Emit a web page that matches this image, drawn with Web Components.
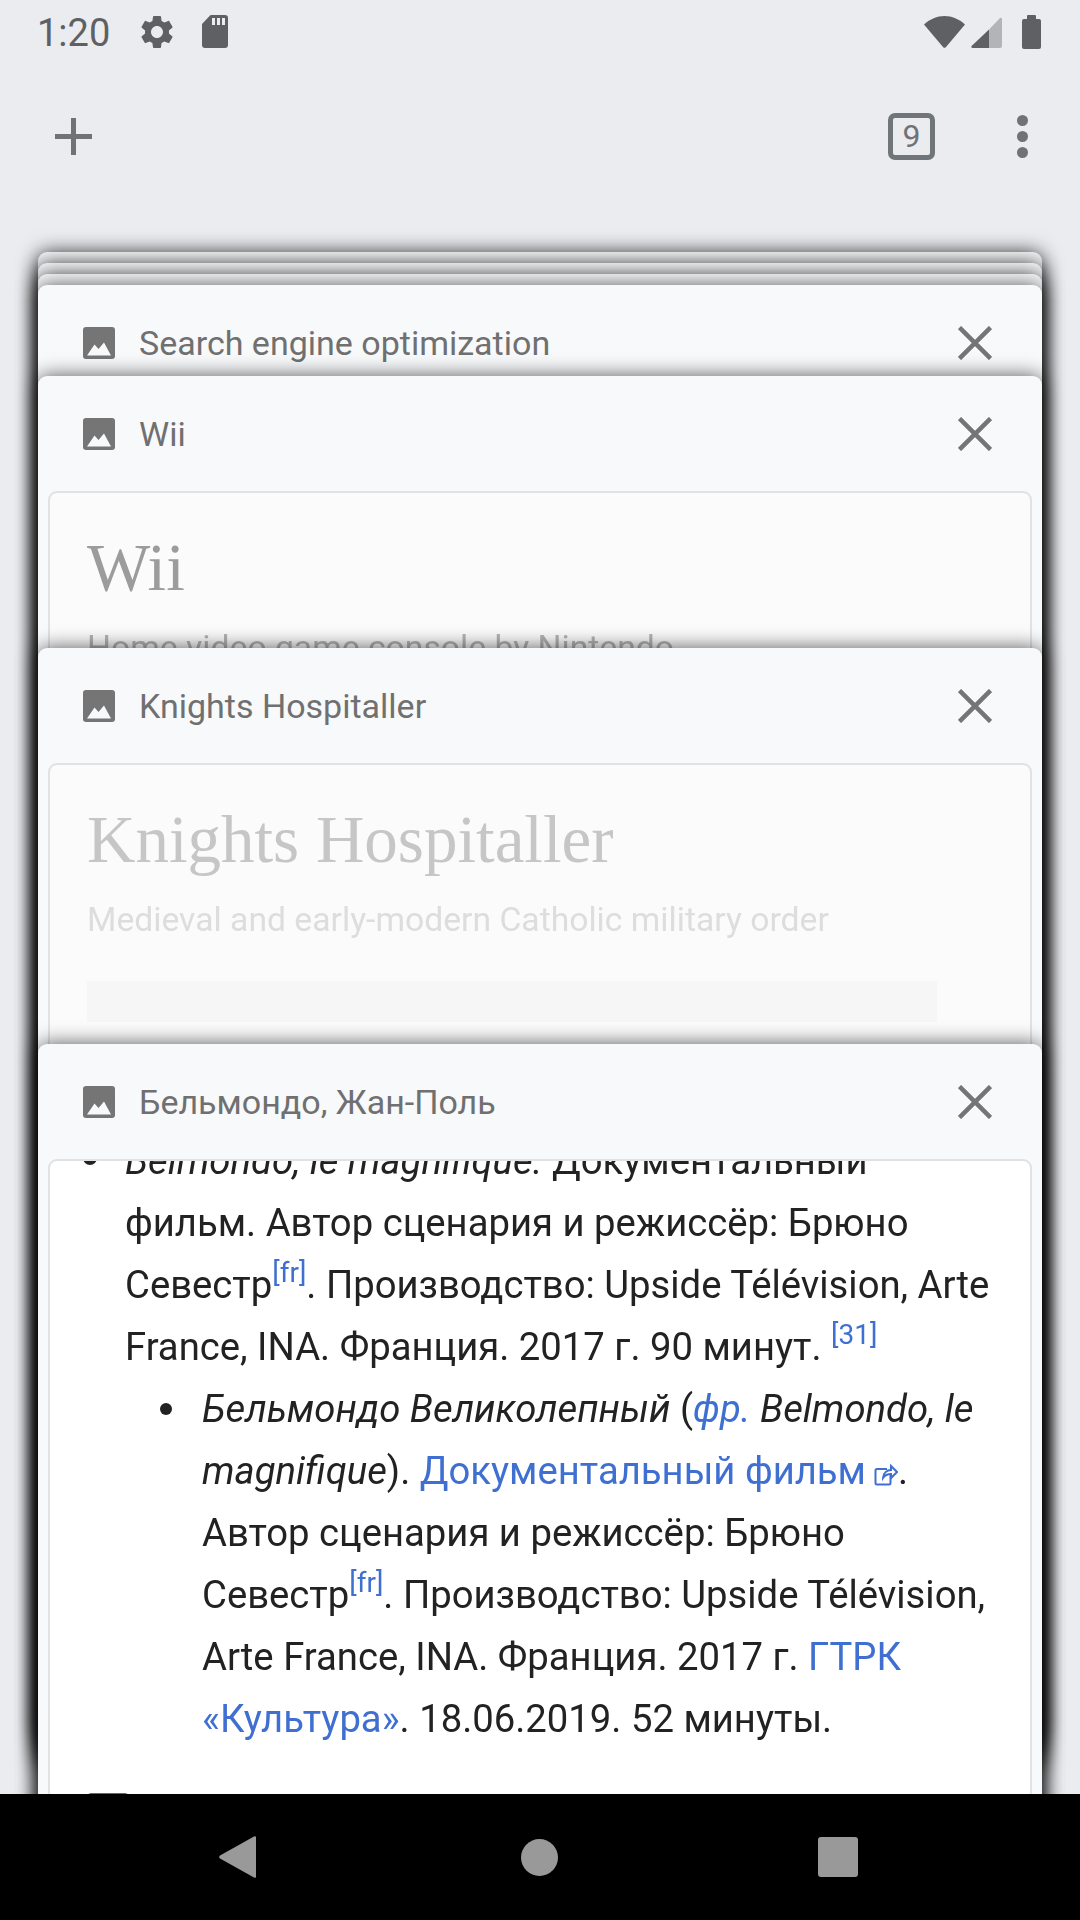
<!DOCTYPE html>
<html lang="ru">
<head>
<meta charset="utf-8">
<title>Tabs</title>
<style>
  html, body { margin: 0; padding: 0; background: #ebecf0; }
</style>
</head>
<body>
<phone-screen>
  <status-bar slot="status"></status-bar>
  <tab-toolbar slot="toolbar" count="9"></tab-toolbar>
  <tab-card slot="tabs" style="--peek: 11px"></tab-card>
  <tab-card slot="tabs" style="--peek: 11px"></tab-card>
  <tab-card slot="tabs" style="--peek: 11px"></tab-card>
  <tab-card slot="tabs" style="--peek: 91px" label="Search engine optimization"></tab-card>
  <tab-card slot="tabs" style="--peek: 272px" label="Wii">
    <page-intro heading="Wii" sub="Home video game console by Nintendo"
      style="--heading-color: #9c9c9c; --sub-color: #b4b4b4"></page-intro>
  </tab-card>
  <tab-card slot="tabs" style="--peek: 396px" label="Knights Hospitaller">
    <page-intro heading="Knights Hospitaller" sub="Medieval and early-modern Catholic military order"
      style="--heading-color: #c6c6c6; --sub-color: #dddddd"></page-intro>
  </tab-card>
  <tab-card slot="tabs" style="--peek: 750px; --page-bg: #fff" label="Бельмондо, Жан-Поль">
    <film-notes></film-notes>
  </tab-card>
  <nav-bar slot="nav"></nav-bar>
</phone-screen>

<script>
class PhoneScreen extends HTMLElement {
  constructor() {
    super();
    this.attachShadow({ mode: 'open' });
    this.shadowRoot.innerHTML = /* html */ `
      <style>
        :host {
          display: flex;
          flex-direction: column;
          width: 1080px;
          height: 1920px;
          overflow: hidden;
          background: #ebecf0;
          font-family: Roboto, "Noto Sans", sans-serif;
        }
        .tabs {
          flex: 1;
          min-height: 0;
          overflow: hidden;
          padding: 43px 38px 0;
        }
      </style>
      <slot name="status"></slot>
      <slot name="toolbar"></slot>
      <div class="tabs"><slot name="tabs"></slot></div>
      <slot name="nav"></slot>
    `;
  }
}

class StatusBar extends HTMLElement {
  constructor() {
    super();
    this.attachShadow({ mode: 'open' });
    this.shadowRoot.innerHTML = /* html */ `
      <style>
        :host {
          display: flex;
          align-items: center;
          height: 63px;
          padding: 0 39px 0 37px;
          color: #5f6063;
        }
        .time { font-size: 38px; line-height: 1; margin-top: 2px; }
        svg { display: block; fill: currentColor; }
        .gear { margin-left: 27px; }
        .sd { margin-left: 25px; }
        .wifi { margin-left: auto; }
        .signal { margin-left: 6px; margin-top: 1px; }
        .battery { margin-left: 20px; }
      </style>
      <span class="time">1:20</span>
      <svg class="gear" width="40" height="40" viewBox="0 0 24 24"><path d="M19.14 12.94c.04-.3.06-.61.06-.94 0-.32-.02-.64-.07-.94l2.03-1.58c.18-.14.23-.41.12-.61l-1.92-3.32c-.12-.22-.37-.29-.59-.22l-2.39.96c-.5-.38-1.03-.7-1.62-.94l-.36-2.54c-.04-.24-.24-.41-.48-.41h-3.84c-.24 0-.43.17-.47.41l-.36 2.54c-.59.24-1.13.57-1.62.94l-2.39-.96c-.22-.08-.47 0-.59.22L2.74 8.87c-.12.21-.08.47.12.61l2.03 1.58c-.05.3-.09.63-.09.94s.02.64.07.94l-2.03 1.58c-.18.14-.23.41-.12.61l1.92 3.32c.12.22.37.29.59.22l2.39-.96c.5.38 1.03.7 1.62.94l.36 2.54c.05.24.24.41.48.41h3.84c.24 0 .44-.17.47-.41l.36-2.54c.59-.24 1.13-.56 1.62-.94l2.39.96c.22.08.47 0 .59-.22l1.92-3.32c.12-.22.07-.47-.12-.61l-2.01-1.58zM12 15.6c-1.98 0-3.6-1.62-3.6-3.6s1.62-3.6 3.6-3.6 3.6 1.62 3.6 3.6-1.62 3.6-3.6 3.6z"/></svg>
      <svg class="sd" width="26" height="33" viewBox="0 0 26 33"><path fill-rule="evenodd" d="M9 0H23a3 3 0 0 1 3 3V30a3 3 0 0 1-3 3H3a3 3 0 0 1-3-3V9.5a1.5 1.5 0 0 1 .5-1L8 .5A1.5 1.5 0 0 1 9 0zM10 3v7h3V3zM15 3v7h3V3zM20 3v7h3V3z"/></svg>
      <svg class="wifi" width="41" height="32" viewBox="0 0 41 32"><path d="M20.5 0C28 0 35 3 41 8.500L22 31a2 2 0 0 1-3 0L0 8.500C6 3 13 0 20.500 0z"/></svg>
      <svg class="signal" width="31" height="31" viewBox="0 0 31 31"><path d="M18 12.500V31H1.500a1.200 1.200 0 0 1-.9-2z"/><path fill="#b3b4b8" d="M18 12.500L29 1a1.200 1.200 0 0 1 2 .8V29a2 2 0 0 1-2 2H18z"/></svg>
      <svg class="battery" width="19" height="34" viewBox="0 0 19 34"><path d="M5 1a1 1 0 0 1 1-1h7a1 1 0 0 1 1 1v3h3a2 2 0 0 1 2 2v26a2 2 0 0 1-2 2H2a2 2 0 0 1-2-2V6a2 2 0 0 1 2-2h3z"/></svg>
    `;
  }
}

class TabToolbar extends HTMLElement {
  constructor() {
    super();
    this.attachShadow({ mode: 'open' });
    this.shadowRoot.innerHTML = /* html */ `
      <style>
        :host {
          display: flex;
          align-items: center;
          height: 146px;
          padding: 0 52px 0 55px;
          color: #6f7276;
        }
        svg { display: block; fill: currentColor; }
        .count {
          box-sizing: border-box;
          display: flex;
          align-items: center;
          justify-content: center;
          width: 47px;
          height: 47px;
          margin-left: auto;
          border: 5px solid #70757a;
          border-radius: 7px;
          font-size: 32px;
          line-height: 1;
        }
        .more { margin-left: 82px; }
      </style>
      <svg width="37" height="37" viewBox="0 0 37 37"><path d="M16 0h5v16h16v5H21v16h-5V21H0v-5h16z"/></svg>
      <span class="count"></span>
      <svg class="more" width="11" height="43" viewBox="0 0 11 43"><circle cx="5.500" cy="5.500" r="5.500"/><circle cx="5.500" cy="21.500" r="5.500"/><circle cx="5.500" cy="37.500" r="5.500"/></svg>
    `;
    this.shadowRoot.querySelector('.count').textContent = this.getAttribute('count');
  }
}

class TabCard extends HTMLElement {
  constructor() {
    super();
    this.attachShadow({ mode: 'open' });
    this.shadowRoot.innerHTML = /* html */ `
      <style>
        :host {
          display: block;
          isolation: isolate;
          height: var(--peek, 100px);
        }
        .sheet {
          box-sizing: border-box;
          height: 1484px;
          overflow: hidden;
          border-radius: 9px;
          background: #f8f9fb;
          box-shadow: 0 0 20px rgba(0, 0, 0, 0.66);
        }
        header {
          display: flex;
          align-items: center;
          height: 116px;
          padding: 0 50px 0 45px;
          color: #707070;
        }
        svg { display: block; flex: none; }
        .label {
          flex: 1;
          margin-left: 24px;
          font-size: 34px;
          white-space: nowrap;
        }
        .page {
          box-sizing: border-box;
          height: 1368px;
          margin: -1px 10px 0;
          overflow: hidden;
          border: 2px solid #e1e2e5;
          border-radius: 9px 9px 0 0;
          background: var(--page-bg, #fbfbfc);
        }
      </style>
      <div class="sheet">
        <header>
          <svg width="32" height="32" viewBox="0 0 32 32">
            <path fill="#757575" d="M3 0h26a3 3 0 0 1 3 3v26a3 3 0 0 1-3 3H3a3 3 0 0 1-3-3V3a3 3 0 0 1 3-3z"/>
            <path fill="#f8f9fb" d="M4 28.500L11.500 17.500 15.500 22 21 15.500 28 28.500z"/>
          </svg>
          <span class="label"></span>
          <svg width="34" height="34" viewBox="0 0 34 34">
            <path fill="none" stroke="#757575" stroke-width="4.500" d="M1.500 1.500l31 31M32.500 1.500l-31 31"/>
          </svg>
        </header>
        <div class="page"><slot></slot></div>
      </div>
    `;
    this.shadowRoot.querySelector('.label').textContent = this.getAttribute('label') || '';
  }
}

class PageIntro extends HTMLElement {
  constructor() {
    super();
    this.attachShadow({ mode: 'open' });
    this.shadowRoot.innerHTML = /* html */ `
      <style>
        :host {
          display: block;
          padding: 36px 37px 0;
          filter: blur(0.4px);
        }
        h1 {
          margin: 0;
          font: 400 67px/76px "Liberation Serif", serif;
          color: var(--heading-color);
          white-space: nowrap;
        }
        p {
          margin: 21px 0 0;
          font-size: 33.7px;
          line-height: 44px;
          color: var(--sub-color);
          white-space: nowrap;
        }
        .bar { height: 41px; width: 850px; margin-top: 39px; background: #f6f6f6; }
      </style>
      <h1></h1>
      <p></p>
      <div class="bar"></div>
    `;
    this.shadowRoot.querySelector('h1').textContent = this.getAttribute('heading');
    this.shadowRoot.querySelector('p').textContent = this.getAttribute('sub');
  }
}

class WikiLink extends HTMLElement {
  constructor() {
    super();
    this.attachShadow({ mode: 'open' });
    const icon = this.hasAttribute('external') ? /* html */ `<svg width="24" height="23" viewBox="0 0 24 23" fill="none" stroke="#3f6fd1" stroke-width="2"><path d="M13 6H3a1.500 1.500 0 0 0-1.500 1.500V20A1.500 1.500 0 0 0 3 21.500h12a1.500 1.500 0 0 0 1.500-1.500V12"/><path d="M9 15c0-5 4-8 8-8V3l6 6-6 6v-4c-3 0-6 1-8 4z"/></svg>` : '';
    // no whitespace here: it would show up as a space next to the link
    this.shadowRoot.innerHTML = `<style>
        :host { color: #3f6fd1; }
        :host([ref]) { font-size: 28px; line-height: 0; vertical-align: 16px; font-style: normal; }
        svg { display: inline-block; margin-left: 8px; vertical-align: -2px; }
      </style><slot></slot>${icon}`;
  }
}

class FilmNotes extends HTMLElement {
  constructor() {
    super();
    this.attachShadow({ mode: 'open' });
    this.shadowRoot.innerHTML = /* html */ `
      <style>
        :host {
          display: block;
          font-size: 38.25px;
          line-height: 62px;
          color: #222;
          white-space: nowrap;
          filter: blur(0.6px);
        }
        ul { margin: 0; padding: 0 0 0 75px; list-style: none; }
        ul ul { padding-left: 77px; }
        li { position: relative; }
        /* the bullets sit further out than the default list marker */
        li::before {
          content: "";
          position: absolute;
          left: -42px;
          top: 25px;
          width: 12px;
          height: 12px;
          border-radius: 50%;
          background: #222;
        }
        .top > li::before { top: 21px; width: 14px; height: 14px; }
        .top { margin-top: -31px; }
        .tail {
          width: 40px;
          height: 20px;
          margin: 43px 0 0 38px;
          border-radius: 3px;
          background: #666;
        }
      </style>
      <ul class="top">
        <li><i>Belmondo, le magnifique.</i> Документальный<br>
          фильм. Автор сценария и режиссёр: Брюно<br>
          Севестр<wiki-link ref>[fr]</wiki-link>. Производство: Upside Télévision, Arte<br>
          France, INA. Франция. 2017 г. 90 минут. <wiki-link ref>[31]</wiki-link>
          <ul>
            <li><i>Бельмондо Великолепный</i> (<wiki-link><i>фр.</i></wiki-link> <i>Belmondo, le</i><br>
              <i>magnifique</i>). <wiki-link external>Документальный фильм</wiki-link>.<br>
              Автор сценария и режиссёр: Брюно<br>
              Севестр<wiki-link ref>[fr]</wiki-link>. Производство: Upside Télévision,<br>
              Arte France, INA. Франция. 2017 г. <wiki-link>ГТРК</wiki-link><br>
              <wiki-link>«Культура»</wiki-link>. 18.06.2019. 52 минуты.</li>
          </ul>
        </li>
      </ul>
      <div class="tail"></div>
    `;
  }
}

class NavBar extends HTMLElement {
  constructor() {
    super();
    this.attachShadow({ mode: 'open' });
    this.shadowRoot.innerHTML = /* html */ `
      <style>
        :host {
          display: flex;
          flex: none;
          align-items: center;
          height: 126px;
          padding-left: 219px;
          background: #000;
        }
        svg { display: block; fill: #999; }
        .home { margin-left: 265px; }
        .recents { margin-left: 260px; }
      </style>
      <svg width="37" height="42" viewBox="0 0 37 42"><path d="M35 .5a1.200 1.200 0 0 1 2 .8V40.700a1.200 1.200 0 0 1-2 .8L1 22.500a2 2 0 0 1 0-3z"/></svg>
      <svg class="home" width="37" height="37" viewBox="0 0 37 37"><circle cx="18.500" cy="18.500" r="18.500"/></svg>
      <svg class="recents" width="40" height="40" viewBox="0 0 40 40"><rect width="40" height="40" rx="3"/></svg>
    `;
  }
}

customElements.define('wiki-link', WikiLink);
customElements.define('film-notes', FilmNotes);
customElements.define('page-intro', PageIntro);
customElements.define('tab-card', TabCard);
customElements.define('tab-toolbar', TabToolbar);
customElements.define('status-bar', StatusBar);
customElements.define('nav-bar', NavBar);
customElements.define('phone-screen', PhoneScreen);
</script>
</body>
</html>
